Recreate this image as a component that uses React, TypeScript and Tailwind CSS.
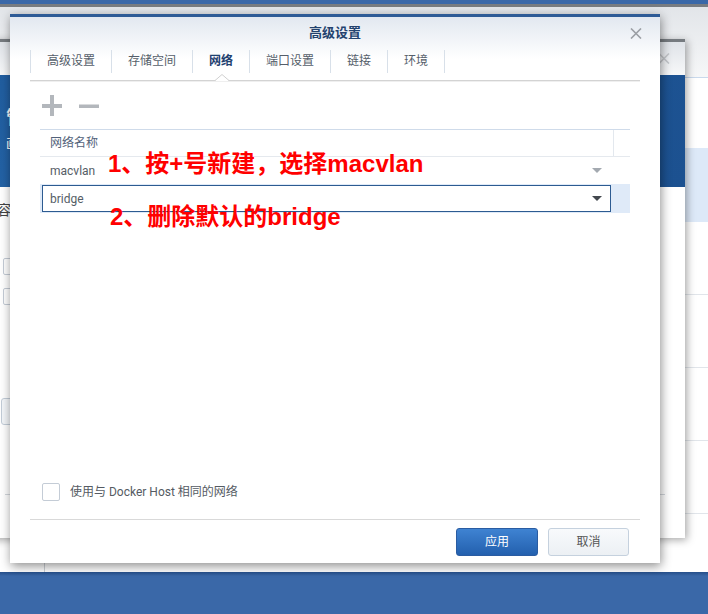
import React from "react";

function Tri({ color }: { color: string }) {
  return (
    <svg width="10" height="5" viewBox="0 0 10 5">
      <polygon points="0,0 10,0 5,5" fill={color} />
    </svg>
  );
}

export default function App() {
  const tabs = ["高级设置", "存储空间", "网络", "端口设置", "链接", "环境"];
  return (
    <div className="relative w-[708px] h-[614px] overflow-hidden bg-[#3a68a8] font-['Roboto','Noto_Sans_CJK_SC',sans-serif]">
      {/* bottom desktop shade */}
      <div className="absolute left-0 right-0 top-[572px] h-[4px] bg-gradient-to-b from-[#264f8a] to-[#3a68a8]" />

      {/* Window A (back) */}
      <div className="absolute left-0 top-[4px] w-[760px] h-[568px] bg-white flex flex-col">
        <div className="h-[3px] bg-[#787c81]" />
        <div className="h-[71px] bg-gradient-to-b from-[#e2e5e9] to-[#f6f7f8] border-b border-[#c9d9ec]" />
        <div className="flex flex-1">
          <div className="w-[45px] border-r border-[#cdd1d6]" />
          <div className="flex-1 flex flex-col">
            <div className="h-[70px]" />
            <div className="h-[74px] bg-[#dde9f8]" />
            <div className="h-[73px] border-b border-[#e1e5ea]" />
            <div className="h-[73px] border-b border-[#e1e5ea]" />
            <div className="h-[73px] border-b border-[#e1e5ea]" />
            <div className="h-[73px] border-b border-[#e1e5ea]" />
          </div>
        </div>
      </div>

      {/* Window B (middle) */}
      <div className="absolute left-[-300px] top-[39px] w-[985px] h-[499px] bg-white flex flex-col shadow-[2px_2px_8px_rgba(0,0,0,0.35)]">
        <div className="h-[3px] bg-[#767b80]" />
        <div className="h-[33px] bg-gradient-to-b from-[#dfe3e8] to-[#f7f8f9] flex items-center justify-end pr-[15px]">
          <svg width="12" height="11" viewBox="0 0 12 11">
            <path d="M1 0.5 L11 10.5 M11 0.5 L1 10.5" stroke="#c3c6ca" strokeWidth="1.6" />
          </svg>
        </div>
        <div className="h-[112px] bg-[linear-gradient(150deg,#1d5797_0%,#2565a9_55%,#1e5595_55%,#1c5190_100%)] flex flex-col pl-[306px] pt-[34px] text-white">
          <div className="text-[18px] leading-[18px] font-bold">管</div>
          <div className="text-[13px] leading-[14px] mt-[10px]">画</div>
        </div>
        <div className="flex-1 flex flex-col pl-[300px]">
          <div className="h-[20px] mt-[13px] ml-[-3px] text-[14px] leading-[20px] text-[#444]">容</div>
          <div className="mt-[38px] ml-[3px] w-[17px] h-[17px] border border-[#c5ccd6] rounded-[2px]" />
          <div className="mt-[13px] ml-[3px] w-[17px] h-[17px] border border-[#c5ccd6] rounded-[2px]" />
          <div className="mt-[93px] ml-[1px] w-[80px] h-[27px] border border-[#c3cdd8] rounded-[3px] bg-[#f3f6f9]" />
          <div className="mt-[69px] ml-[5px] mr-[20px] h-px bg-[#d3d7dc]" />
        </div>
      </div>

      {/* Dialog */}
      <div className="absolute left-[10px] top-[14px] w-[650px] h-[549px] bg-white flex flex-col shadow-[1px_3px_10px_rgba(0,0,0,0.45)]">
        <div className="h-[3px] bg-[#2e5b96]" />
        <div className="bg-[linear-gradient(to_bottom,#e2e8f0_0px,#ffffff_42px)]">
          <div className="relative h-[32px] flex items-center justify-center">
            <span className="text-[13px] font-bold text-[#23426e]">高级设置</span>
            <svg className="absolute right-[18px] top-[11px]" width="12" height="11" viewBox="0 0 12 11">
              <path d="M1 0.5 L11 10.5 M11 0.5 L1 10.5" stroke="#9b9fa4" strokeWidth="1.6" />
            </svg>
          </div>
          <div className="relative mx-[20px] h-[32px] border-b border-[#d3d3d3] shadow-[0_1px_0_#efefef] flex items-start pt-[1px]">
            {tabs.map((t, i) => (
              <div
                key={t}
                className={
                  "h-[23px] px-[16px] border-l border-[#d8e0e9] text-[12px] leading-[23px] " +
                  (i === tabs.length - 1 ? "border-r " : "") +
                  (t === "网络" ? "font-bold text-[#1f4170]" : "text-[#555e6a]")
                }
              >
                {t}
              </div>
            ))}
            <svg className="absolute left-[185px] bottom-[-1px]" width="14" height="7" viewBox="0 0 14 7">
              <polygon points="0,7 7,0.5 14,7" fill="#ffffff" />
              <polyline points="0,6.5 7,0.5 14,6.5" fill="none" stroke="#d0d0d0" strokeWidth="1" />
            </svg>
          </div>
        </div>

        <div className="flex-1 flex flex-col px-[30px] pb-[18px]">
          <div className="mt-[14px] h-[21px] flex items-center ml-[2px]">
            <svg width="20" height="21" viewBox="0 0 20 21">
              <rect x="0" y="9" width="20" height="4" fill="#b3b7bc" />
              <rect x="8" y="0" width="4" height="21" fill="#b3b7bc" />
            </svg>
            <svg className="ml-[17px]" width="20" height="21" viewBox="0 0 20 21">
              <rect x="0" y="9.5" width="20" height="3.5" fill="#b3b7bc" />
            </svg>
          </div>

          <div className="mt-[13px] flex flex-col">
            <div className="h-[28px] border-t border-b border-t-[#cfdbea] border-b-[#e5e9ee] flex">
              <div className="flex-1 pl-[10px] flex items-center text-[12px] text-[#52627a]">网络名称</div>
              <div className="w-[17px] border-l border-[#e3e8ee]" />
            </div>
            <div className="h-[27px] flex items-center justify-between pl-[10px] pr-[28px]">
              <span className="text-[12px] text-[#555d66]">macvlan</span>
              <Tri color="#a3a9b0" />
            </div>
            <div className="h-[29px] bg-[#dfeaf8] pl-[2px] pr-[19px] py-px flex">
              <div className="flex-1 h-[27px] border border-[#2d5b91] bg-white flex items-center justify-between pl-[7px] pr-[8px]">
                <span className="text-[12px] text-[#555d66]">bridge</span>
                <Tri color="#43484e" />
              </div>
            </div>
          </div>

          <div className="flex-1" />

          <div className="flex items-center ml-[2px]">
            <div className="w-[18px] h-[18px] border border-[#c4ccd6] rounded-[2px] bg-white" />
            <span className="ml-[10px] text-[12px] text-[#555b63]">使用与 Docker Host 相同的网络</span>
          </div>
        </div>

        <div className="mx-[20px] border-t border-[#d9d9d9] pt-[8px] pb-[7px] pr-[11px] flex justify-end gap-[10px]">
          <button className="w-[82px] h-[28px] rounded-[3px] border border-[#2a5ca2] bg-gradient-to-b from-[#3f83d2] to-[#2360ae] text-white text-[12px]">
            应用
          </button>
          <button className="w-[81px] h-[28px] rounded-[3px] border border-[#c5d1de] bg-gradient-to-b from-[#f8fafc] to-[#ecf0f4] text-[#555] text-[12px]">
            取消
          </button>
        </div>
      </div>

      {/* Annotations */}
      <div className="absolute left-[108px] top-[152px] text-[24px] leading-[24px] font-bold text-[#ff0000] whitespace-nowrap font-['Liberation_Sans','Noto_Sans_CJK_SC',sans-serif]">
        1、按+号新建，选择macvlan
      </div>
      <div className="absolute left-[110px] top-[205px] text-[24px] leading-[24px] font-bold text-[#ff0000] whitespace-nowrap font-['Liberation_Sans','Noto_Sans_CJK_SC',sans-serif]">
        2、删除默认的bridge
      </div>
    </div>
  );
}
